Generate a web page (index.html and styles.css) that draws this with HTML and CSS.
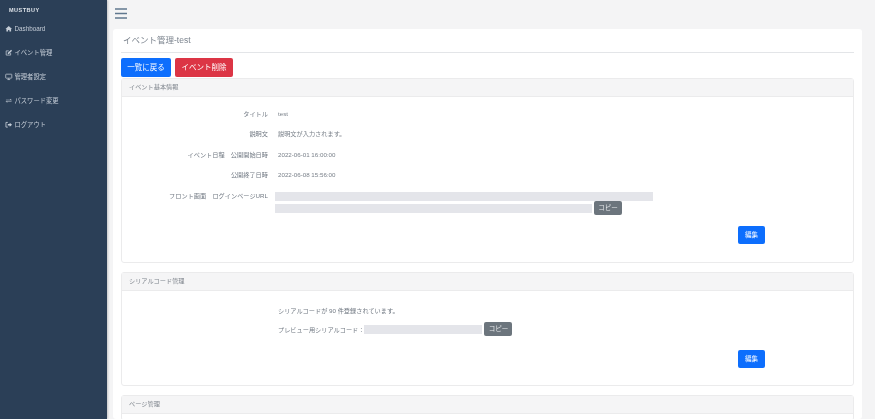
FILE: index.html
```html
<!DOCTYPE html>
<html lang="ja">
<head>
<meta charset="utf-8">
<title>イベント管理-test</title>
<link rel="stylesheet" href="styles.css">
</head>
<body>
<div class="app">
  <aside class="sidebar">
    <div class="brand">MUSTBUY</div>
    <nav class="nav">
      <a class="nav-item"><svg class="nav-icon" viewBox="0 0 16 16"><path d="M8 2 1 8.500h2V14h3.600v-3.600h2.800V14H13V8.500h2z" fill="currentColor"/></svg>Dashboard</a>
      <a class="nav-item"><svg class="nav-icon" viewBox="0 0 16 16"><path d="M12 8.500V13H2.500V4H8" fill="none" stroke="currentColor" stroke-width="1.600"/><path d="M6 8 13 1.500l2 2L8.500 10.500 6 11z" fill="currentColor"/></svg>イベント管理</a>
      <a class="nav-item"><svg class="nav-icon" viewBox="0 0 16 16"><rect x="1.500" y="2.500" width="13" height="8.500" rx="1" fill="none" stroke="currentColor" stroke-width="1.600"/><path d="M5 14h6M8 11v3" stroke="currentColor" stroke-width="1.600"/></svg>管理者設定</a>
      <a class="nav-item"><svg class="nav-icon" viewBox="0 0 16 16"><path d="M2 6h9V3.500L15 7H2zM14 10H5v2.500L1 9h13z" fill="currentColor"/></svg>パスワード変更</a>
      <a class="nav-item"><svg class="nav-icon" viewBox="0 0 16 16"><path d="M6 3H2v10h4" fill="none" stroke="currentColor" stroke-width="1.800"/><path d="M6 6.500h4V3.500L15 8l-5 4.500V9.500H6z" fill="currentColor"/></svg>ログアウト</a>
    </nav>
  </aside>
  <div class="main">
    <header class="topbar">
      <svg class="burger" viewBox="0 0 12 11"><path d="M0 1h12M0 5.500h12M0 10h12" stroke="#60788f" stroke-width="1.700"/></svg>
    </header>
    <main class="panel">
      <h1 class="title">イベント管理-test</h1>
      <div class="actions">
        <button class="btn btn-blue btn-lg">一覧に戻る</button>
        <button class="btn btn-red btn-lg">イベント削除</button>
      </div>

      <section class="card card-first">
        <div class="card-head">イベント基本情報</div>
        <div class="card-body">
          <div class="row"><div class="label">タイトル</div><div class="value">test</div></div>
          <div class="row"><div class="label">説明文</div><div class="value">説明文が入力されます。</div></div>
          <div class="row"><div class="label">イベント日程　公開開始日時</div><div class="value">2022-06-01 16:00:00</div></div>
          <div class="row"><div class="label">公開終了日時</div><div class="value">2022-06-08 15:56:00</div></div>
          <div class="row row-url">
            <div class="label">フロント画面　ログインページURL</div>
            <div class="url">
              <div class="mask mask-long"></div>
              <div class="url-line"><div class="mask mask-mid"></div><button class="btn btn-grey">コピー</button></div>
            </div>
          </div>
          <div class="foot foot-first"><button class="btn btn-blue btn-edit">編集</button></div>
        </div>
      </section>

      <section class="card">
        <div class="card-head">シリアルコード管理</div>
        <div class="card-body serial">
          <p class="serial-text">シリアルコードが 90 件登録されています。</p>
          <div class="serial-line">プレビュー用シリアルコード：<div class="mask mask-code"></div><button class="btn btn-grey">コピー</button></div>
          <div class="foot"><button class="btn btn-blue btn-edit">編集</button></div>
        </div>
      </section>

      <section class="card">
        <div class="card-head">ページ管理</div>
        <div class="card-body"></div>
      </section>
    </main>
  </div>
</div>
</body>
</html>
```

FILE: styles.css
```css
* { box-sizing: border-box; }
html, body { margin: 0; height: 100%; overflow: hidden; }
body {
  font-family: "Liberation Sans", "Noto Sans CJK JP", sans-serif;
  background: #f4f4f5;
  color: #717983;
  filter: blur(0.4px);
}
.app { display: flex; height: 419px; overflow: hidden; }
.sidebar { width: 107px; flex: none; background: #2b3f57; color: #c4ccd6; box-shadow: 1px 0 2px rgba(0,0,0,.2); }
.brand { padding: 6px 0 0 9px; height: 17px; font-size: 5.500px; line-height: 8px; font-weight: bold; letter-spacing: .5px; color: #dfe4ea; }
.nav { display: flex; flex-direction: column; }
.nav-item { height: 24px; display: flex; align-items: center; gap: 2px; padding-left: 5px; font-size: 6.300px; line-height: 24px; }
.nav-icon { width: 7.500px; height: 7.500px; flex: none; }
.main { flex: 1; min-width: 0; padding: 0 13px 0 6px; }
.topbar { height: 29px; padding: 8px 0 0 2px; }
.burger { display: block; width: 12px; height: 11px; }
.panel { background: #fff; border-radius: 3px; padding: 0 8px; height: 390px; overflow: hidden; }
.title { margin: 0; height: 24px; border-bottom: 1px solid #e3e5e8; padding: 4px 0 0 2px; font-size: 8.500px; line-height: 14px; font-weight: 400; color: #7d858f; }
.actions { display: flex; gap: 4px; margin-top: 5px; height: 20px; }
.btn { border: 0; border-radius: 2px; color: #fff; font-family: inherit; padding: 0; font-size: 6.500px; line-height: 1; }
.btn-lg { height: 18.500px; font-size: 7.500px; }
.btn-blue { background: #0d6efd; }
.btn-blue.btn-lg { width: 50px; }
.btn-red { background: #dc3545; width: 58px; }
.btn-grey { background: #6c757d; width: 28px; height: 14px; color: #e8eaec; }
.btn-edit { width: 27px; height: 18px; }
.card { border: 1px solid #ebebec; border-radius: 3px; margin-bottom: 9px; }
.card-head { height: 18px; background: #f5f5f6; border-bottom: 1px solid #ebebec; padding-left: 7px; font-size: 6.200px; line-height: 16px; color: #7f858d; }
.card-body { padding: 6px 0 0; }
.row { display: flex; height: 20.500px; align-items: center; font-size: 6.200px; }
.label { width: 146px; text-align: right; flex: none; }
.value { margin-left: 10px; color: #7a818a; }
.row-url { align-items: flex-start; height: auto; margin-top: 7px; }
.row-url .label { margin-top: -1px; }
.url { margin-left: 7px; }
.mask { background: #e4e5ea; height: 9px; }
.mask-long { width: 378px; }
.url-line { display: flex; align-items: center; gap: 2px; }
.mask-mid { width: 317px; }
.mask-code { width: 118px; margin-right: 2px; }
.foot { display: flex; justify-content: flex-end; padding-right: 88px; }
.foot-first { margin-top: 11px; height: 36px; }
.serial { padding-top: 14px; height: 94px; }
.serial-text { margin: 0 0 0 156px; height: 11px; font-size: 6.200px; line-height: 11px; }
.serial-line { display: flex; align-items: center; margin: 6px 0 0 156px; font-size: 6.200px; height: 14px; }
.serial .foot { margin-top: 14px; }
```
